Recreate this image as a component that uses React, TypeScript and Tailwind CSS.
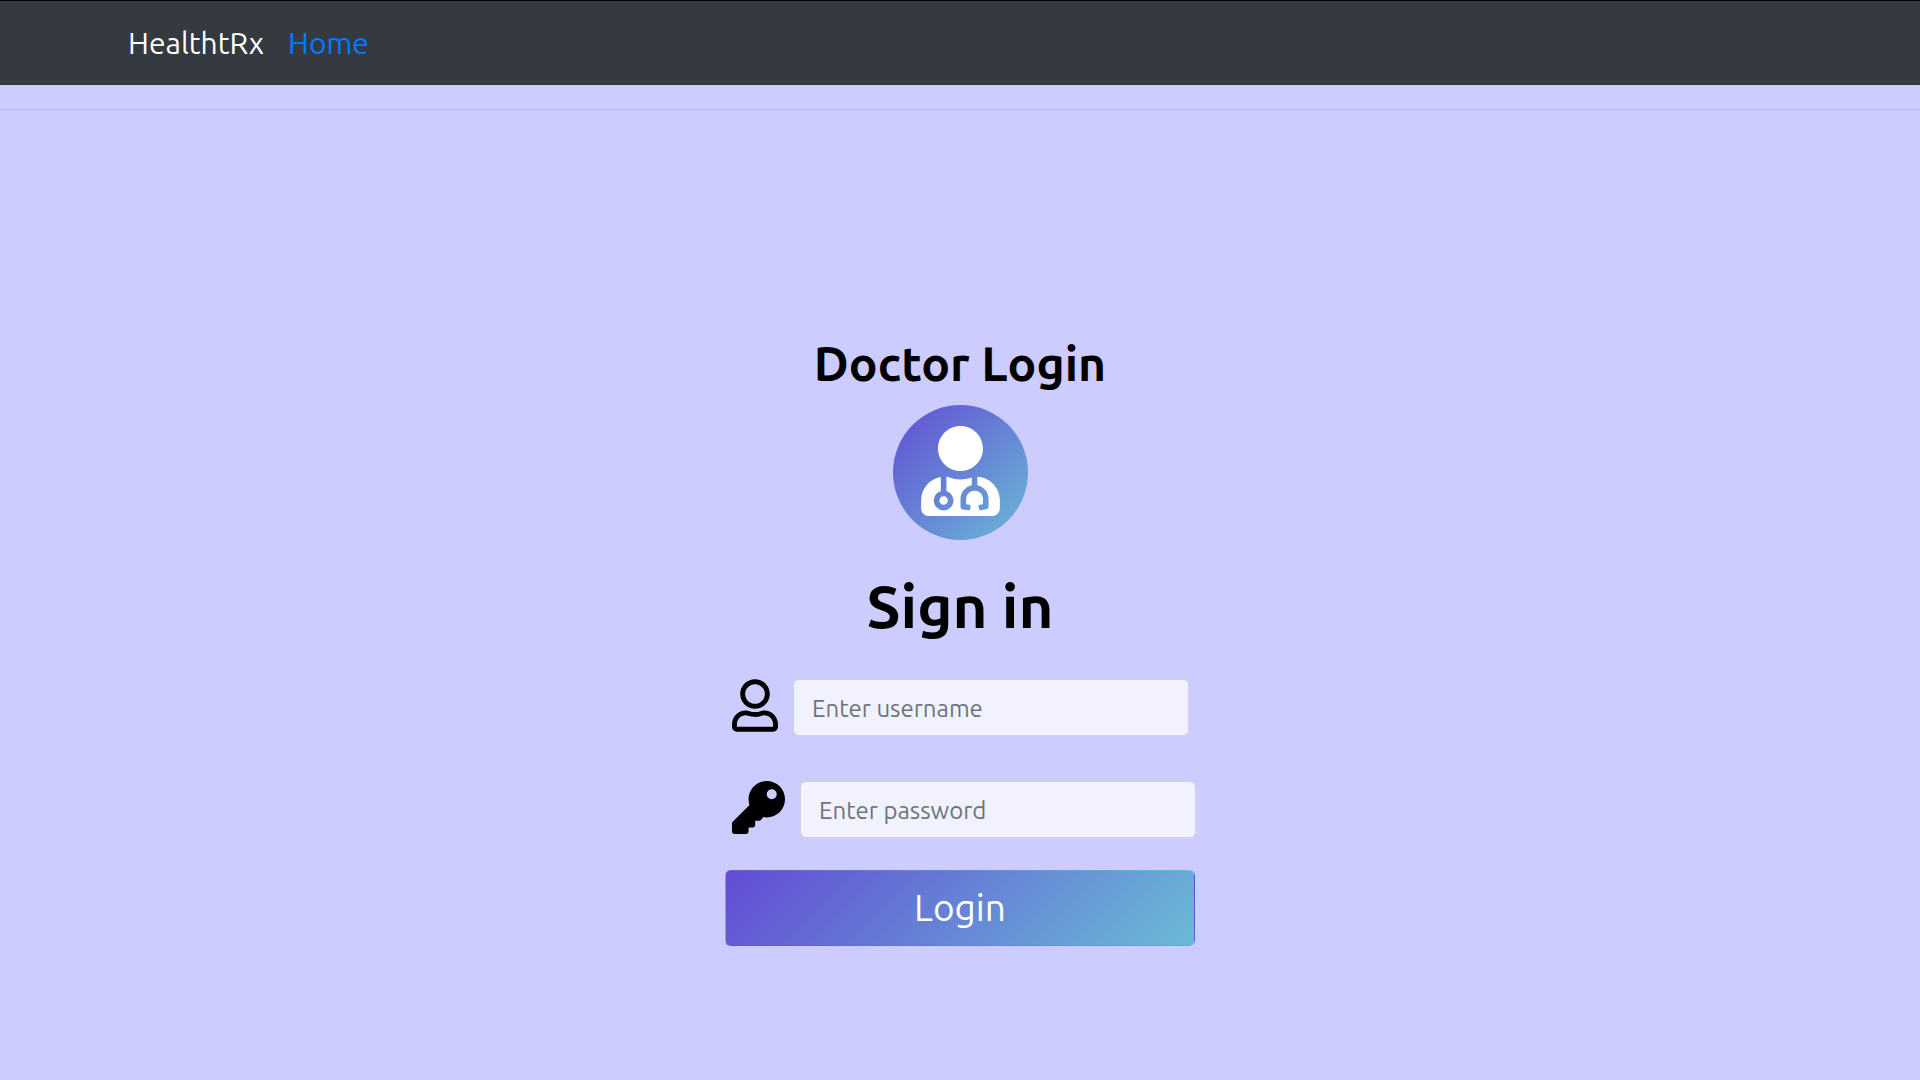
import { FaKey, FaRegUser, FaUserMd } from "react-icons/fa";

const fieldClass =
  "h-[57px] w-[396px] shrink-0 rounded-md border border-[#ced4da] bg-[#f2f2ff] px-[18px] pt-0.5 text-[24px] text-[#495057] placeholder:text-[#6c757d] placeholder:opacity-100 outline-none";

function NavBar() {
  return (
    <nav className="flex h-[85px] items-center gap-6 border-t border-black bg-[#343a40] px-32 text-[30px] leading-10">
      <span className="text-white">HealthtRx</span>
      <a href="#home" className="text-[#007bff]">
        Home
      </a>
    </nav>
  );
}

function LoginForm() {
  return (
    <form className="flex w-[470px] flex-col" onSubmit={(e) => e.preventDefault()}>
      <div className="flex items-start gap-[15px] pl-[7px]">
        <label htmlFor="username" aria-label="Username">
          <FaRegUser className="h-[53px] w-[46px]" />
        </label>
        <input id="username" type="text" placeholder="Enter username" className={fieldClass} />
      </div>
      <div className="mt-[45px] flex items-start gap-[15px] pl-[7px]">
        <label htmlFor="password" aria-label="Password">
          <FaKey className="h-[53px] w-[53px]" />
        </label>
        <input id="password" type="password" placeholder="Enter password" className={fieldClass} />
      </div>
      <button
        type="submit"
        className="mt-8 h-[76px] rounded-md border border-transparent bg-[linear-gradient(135deg,#634cd5,#69bad6)] text-[37px] leading-[52px] text-white"
      >
        Login
      </button>
    </form>
  );
}

export default function App() {
  return (
    <div className="min-h-screen bg-[#ccccff] font-['Ubuntu','Noto_Sans',sans-serif] text-black">
      <NavBar />
      <hr className="mt-6 border-t border-[#b8b8e6]" />
      <main className="flex flex-col items-center pt-[224px]">
        <h1 className="text-[48px] leading-[58px] font-semibold">Doctor Login</h1>
        <div className="mt-[13px] flex h-[135px] w-[135px] justify-center rounded-full bg-[linear-gradient(135deg,#634cd5,#69bad6)] pt-[21px]">
          <FaUserMd className="h-[90px] w-[79px] text-white" />
        </div>
        <h2 className="mt-[30px] mb-[37px] text-[60px] leading-[72px] font-semibold">Sign in</h2>
        <LoginForm />
      </main>
    </div>
  );
}
